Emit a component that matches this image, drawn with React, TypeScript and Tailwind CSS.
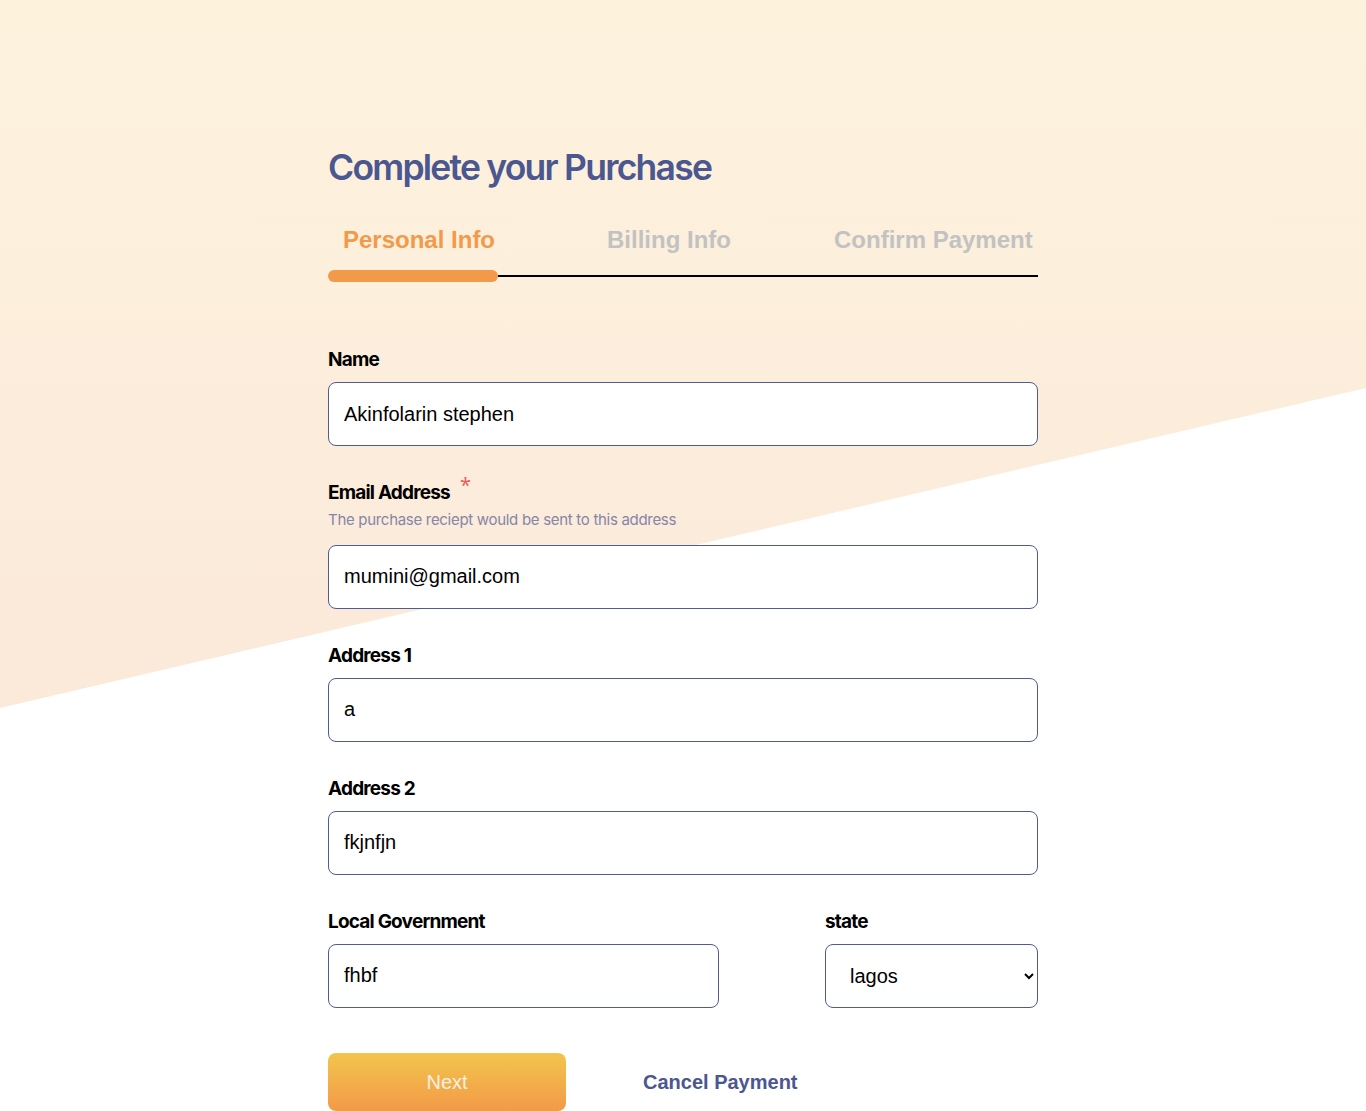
import React from 'react';

const labelCls =
  "font-['Inter',sans-serif] font-bold text-[19px] tracking-[-0.042em] text-black leading-none";
const inputCls =
  "w-full h-[64px] rounded-[8px] border border-[#4f5b93] bg-white px-[15px] font-['Liberation_Sans',Arial,sans-serif] text-[20px] text-black outline-none";

function Field({ label, value, className = '' }: { label: string; value: string; className?: string }) {
  return (
    <div className={className}>
      <div className={labelCls}>{label}</div>
      <input className={`${inputCls} mt-[13px]`} defaultValue={value} />
    </div>
  );
}

export default function App() {
  return (
    <div className="relative min-h-screen w-full overflow-hidden bg-white">
      {/* background wedge */}
      <div className="absolute inset-x-0 top-0 h-[708px] bg-[linear-gradient(to_bottom,#fdf3dd,#fbe9da)] [clip-path:polygon(0_0,100%_0,100%_388px,0_100%)]" />

      <div className="relative mx-auto w-[710px] pt-[146px] pb-[40px]">
        <h1 className="font-['Inter',sans-serif] font-semibold text-[35.5px] leading-[44px] tracking-[-0.05em] text-[#4b5790]">
          Complete your Purchase
        </h1>

        {/* steps */}
        <div className="mt-[38px]">
          <div className="flex items-center font-['Liberation_Sans',Arial,sans-serif] font-bold text-[24px] leading-none">
            <div className="w-[279px] pl-[15px] text-[#f39a4a]">Personal Info</div>
            <div className="w-[227px] text-[#c2c2c2]">Billing Info</div>
            <div className="text-[#c2c2c2]">Confirm Payment</div>
          </div>
          <div className="mt-[18px] flex items-center">
            <div className="h-[12px] w-[170px] rounded-full bg-[#f39a4a]" />
            <div className="h-[1.5px] flex-1 bg-black" />
          </div>
        </div>

        <Field label="Name" value="Akinfolarin stephen" className="mt-[68px]" />

        <div className="mt-[37px]">
          <div className="flex items-start">
            <span className={labelCls}>Email Address</span>
            <span className="ml-[10px] -mt-[8px] text-[20px] leading-none text-[#ef5a5a]">*</span>
          </div>
          <div className="mt-[7px] font-['Inter',sans-serif] text-[15px] tracking-[-0.02em] text-[#8685a9]">
            The purchase reciept would be sent to this address
          </div>
          <input className={`${inputCls} mt-[13px]`} defaultValue="mumini@gmail.com" />
        </div>

        <Field label="Address 1" value="a" className="mt-[37px]" />
        <Field label="Address 2" value="fkjnfjn" className="mt-[37px]" />

        <div className="mt-[37px] flex justify-between">
          <Field label="Local Government" value="fhbf" className="w-[391px]" />
          <div className="w-[213px]">
            <div className={labelCls}>state</div>
            <select
              className="mt-[13px] h-[64px] w-full rounded-[8px] border border-[#4f5b93] bg-white pl-[20px] pr-[4px] font-['Liberation_Sans',Arial,sans-serif] text-[20px] text-black outline-none"
              defaultValue="lagos"
            >
              <option value="lagos">lagos</option>
              <option value="abuja">abuja</option>
            </select>
          </div>
        </div>

        <div className="mt-[45px] flex items-center">
          <button className="h-[58px] w-[238px] rounded-[8px] bg-[linear-gradient(to_bottom,#f2c54c,#f29a48)] font-['Liberation_Sans',Arial,sans-serif] text-[20px] text-[#fdf0e0]">
            Next
          </button>
          <button className="ml-[77px] font-['Liberation_Sans',Arial,sans-serif] font-bold text-[20px] text-[#4b5790]">
            Cancel Payment
          </button>
        </div>
      </div>
    </div>
  );
}
